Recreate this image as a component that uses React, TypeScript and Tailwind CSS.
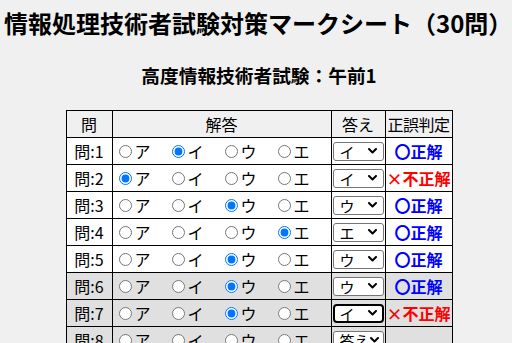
import React from "react";

type Row = { no: number; pick: number | null; answer: string; result: "ok" | "ng" | null; shaded?: boolean; focused?: boolean };

const OPTIONS = ["ア", "イ", "ウ", "エ"];

const ROWS: Row[] = [
  { no: 1, pick: 1, answer: "イ", result: "ok" },
  { no: 2, pick: 0, answer: "イ", result: "ng" },
  { no: 3, pick: 2, answer: "ウ", result: "ok" },
  { no: 4, pick: 3, answer: "エ", result: "ok" },
  { no: 5, pick: 2, answer: "ウ", result: "ok" },
  { no: 6, pick: 2, answer: "ウ", result: "ok", shaded: true },
  { no: 7, pick: 2, answer: "イ", result: "ng", shaded: true, focused: true },
  { no: 8, pick: null, answer: "答え", result: null, shaded: true },
];

function Chevron() {
  return (
    <svg width="9" height="6" viewBox="0 0 9 6" className="shrink-0">
      <path d="M1 1 L4.5 4.5 L8 1" fill="none" stroke="black" strokeWidth="2" strokeLinecap="round" strokeLinejoin="round" />
    </svg>
  );
}

function FakeSelect({ value, focused }: { value: string; focused?: boolean }) {
  return (
    <div
      className={
        focused
          ? "mx-auto flex h-[19px] w-[51px] items-center justify-between overflow-hidden rounded-[4px] border-2 border-black bg-white pl-[5px] pr-[5px] text-[15px] leading-none"
          : "mx-auto flex h-[19px] w-[51px] items-center justify-between overflow-hidden rounded-[3px] border border-[#767676] bg-white pl-[6px] pr-[6px] text-[15px] leading-none"
      }
    >
      <span className="whitespace-nowrap">{value}</span>
      <Chevron />
    </div>
  );
}

export default function App() {
  return (
    <div className="min-h-[343px] bg-[#f0f0f0] font-['Noto_Sans_CJK_JP',sans-serif] text-black">
      <h2 className="pl-[4px] pt-[6px] text-[24px] font-bold leading-[34px] whitespace-nowrap">
        情報処理技術者試験対策マークシート（30問）
      </h2>
      <div className="flex flex-col items-center pl-[6px]">
        <h3 className="mt-[21px] text-[18.7px] font-bold leading-[28px]">高度情報技術者試験：午前1</h3>
        <table className="mt-[21px] table-fixed border-collapse text-[16px] leading-[25px]">
          <colgroup>
            <col className="w-[46px]" />
            <col className="w-[215px]" />
            <col className="w-[54px]" />
            <col className="w-[67px]" />
          </colgroup>
          <thead>
            <tr className="h-[27px]">
              <th className="border border-black p-0 text-center font-normal">問</th>
              <th className="border border-black p-0 text-center font-normal">解答</th>
              <th className="border border-black p-0 text-center font-normal">答え</th>
              <th className="border border-black p-0 text-center font-normal whitespace-nowrap tracking-[-0.5px]">正誤判定</th>
            </tr>
          </thead>
          <tbody>
            {ROWS.map((row) => (
              <tr key={row.no} className={row.shaded ? "h-[27px] bg-[#e0e0e0]" : "h-[27px] bg-white"}>
                <td className="border border-black p-0 text-center whitespace-nowrap">問:{row.no}</td>
                <td className="border border-black p-0">
                  <div className="flex items-center pl-[6px]">
                    {OPTIONS.map((opt, i) => (
                      <label key={opt} className="flex w-[53px] items-center gap-[3px]">
                        <input
                          type="radio"
                          name={`q${row.no}`}
                          defaultChecked={row.pick === i}
                          className="m-0 h-[13px] w-[13px]"
                        />
                        <span>{opt}</span>
                      </label>
                    ))}
                  </div>
                </td>
                <td className="border border-black p-0">
                  <FakeSelect value={row.answer} focused={row.focused} />
                </td>
                <td className="border border-black p-0 text-center font-bold whitespace-nowrap">
                  {row.result === "ok" && <span className="text-[#0000ff]">〇正解</span>}
                  {row.result === "ng" && <span className="text-[#ff0000]">×不正解</span>}
                </td>
              </tr>
            ))}
          </tbody>
        </table>
      </div>
    </div>
  );
}
